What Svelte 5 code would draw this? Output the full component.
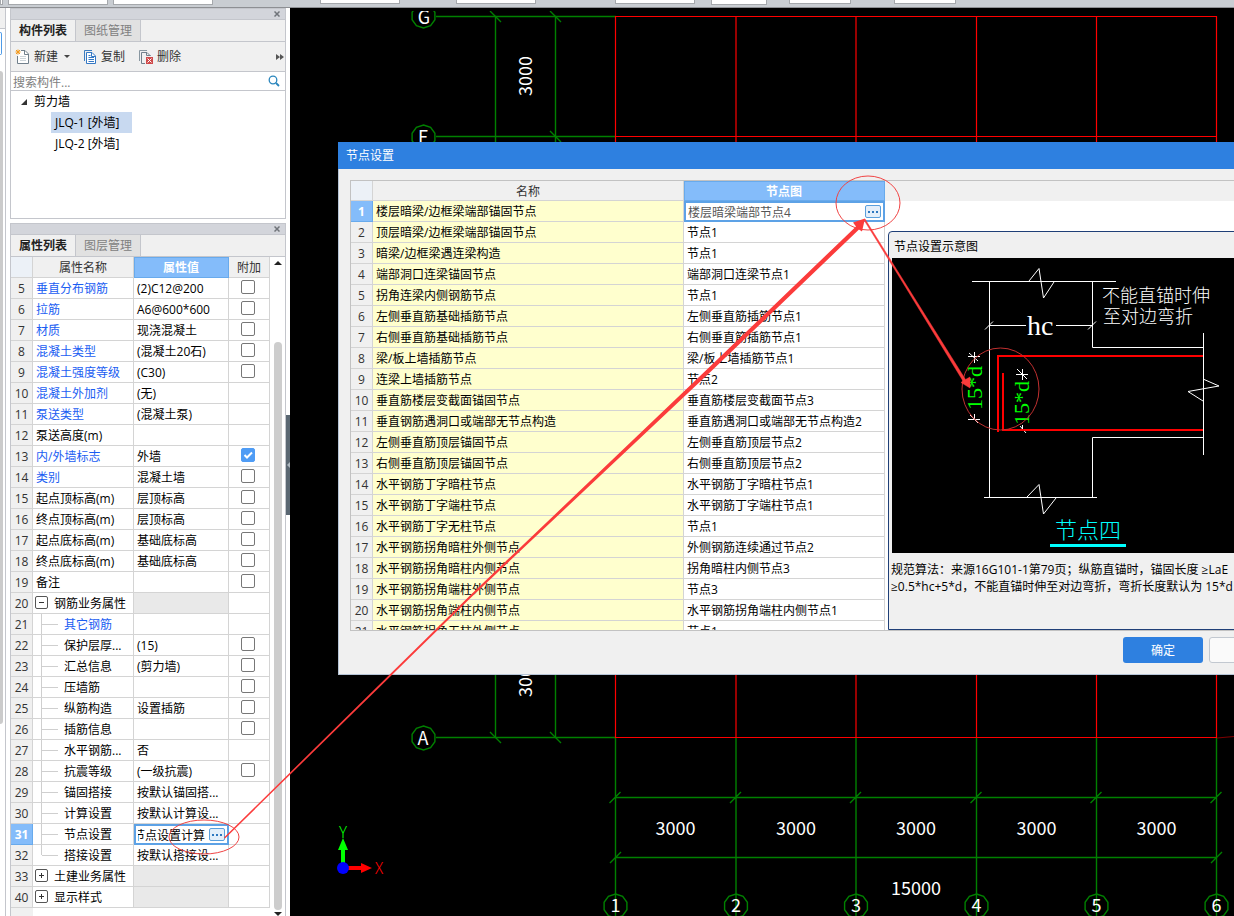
<script>
  const properties = [
    { n: 5, name: '垂直分布钢筋', value: '(2)C12@200', blue: true, box: true },
    { n: 6, name: '拉筋', value: 'A6@600*600', blue: true, box: true },
    { n: 7, name: '材质', value: '现浇混凝土', blue: true, box: true },
    { n: 8, name: '混凝土类型', value: '(混凝土20石)', blue: true, box: true },
    { n: 9, name: '混凝土强度等级', value: '(C30)', blue: true, box: true },
    { n: 10, name: '混凝土外加剂', value: '(无)', blue: true },
    { n: 11, name: '泵送类型', value: '(混凝土泵)', blue: true },
    { n: 12, name: '泵送高度(m)', value: '' },
    { n: 13, name: '内/外墙标志', value: '外墙', blue: true, box: true, checked: true },
    { n: 14, name: '类别', value: '混凝土墙', blue: true, box: true },
    { n: 15, name: '起点顶标高(m)', value: '层顶标高', box: true },
    { n: 16, name: '终点顶标高(m)', value: '层顶标高', box: true },
    { n: 17, name: '起点底标高(m)', value: '基础底标高', box: true },
    { n: 18, name: '终点底标高(m)', value: '基础底标高', box: true },
    { n: 19, name: '备注', value: '', box: true },
    { n: 20, name: '钢筋业务属性', value: '', group: 'open' },
    { n: 21, name: '其它钢筋', value: '', blue: true, child: true },
    { n: 22, name: '保护层厚...', value: '(15)', child: true, box: true },
    { n: 23, name: '汇总信息', value: '(剪力墙)', child: true, box: true },
    { n: 24, name: '压墙筋', value: '', child: true, box: true },
    { n: 25, name: '纵筋构造', value: '设置插筋', child: true, box: true },
    { n: 26, name: '插筋信息', value: '', child: true, box: true },
    { n: 27, name: '水平钢筋...', value: '否', child: true },
    { n: 28, name: '抗震等级', value: '(一级抗震)', child: true, box: true },
    { n: 29, name: '锚固搭接', value: '按默认锚固搭...', child: true },
    { n: 30, name: '计算设置', value: '按默认计算设...', child: true },
    { n: 31, name: '节点设置', value: '节点设置计算', child: true, editing: true },
    { n: 32, name: '搭接设置', value: '按默认搭接设...', child: true, last: true },
    { n: 33, name: '土建业务属性', value: '', group: 'closed' },
    { n: 40, name: '显示样式', value: '', group: 'closed' }
  ];

  const nodes = [
    ['楼层暗梁/边框梁端部锚固节点', '楼层暗梁端部节点4'],
    ['顶层暗梁/边框梁端部锚固节点', '节点1'],
    ['暗梁/边框梁遇连梁构造', '节点1'],
    ['端部洞口连梁锚固节点', '端部洞口连梁节点1'],
    ['拐角连梁内侧钢筋节点', '节点1'],
    ['左侧垂直筋基础插筋节点', '左侧垂直筋插筋节点1'],
    ['右侧垂直筋基础插筋节点', '右侧垂直筋插筋节点1'],
    ['梁/板上墙插筋节点', '梁/板上墙插筋节点1'],
    ['连梁上墙插筋节点', '节点2'],
    ['垂直筋楼层变截面锚固节点', '垂直筋楼层变截面节点3'],
    ['垂直钢筋遇洞口或端部无节点构造', '垂直筋遇洞口或端部无节点构造2'],
    ['左侧垂直筋顶层锚固节点', '左侧垂直筋顶层节点2'],
    ['右侧垂直筋顶层锚固节点', '右侧垂直筋顶层节点2'],
    ['水平钢筋丁字暗柱节点', '水平钢筋丁字暗柱节点1'],
    ['水平钢筋丁字端柱节点', '水平钢筋丁字端柱节点1'],
    ['水平钢筋丁字无柱节点', '节点1'],
    ['水平钢筋拐角暗柱外侧节点', '外侧钢筋连续通过节点2'],
    ['水平钢筋拐角暗柱内侧节点', '拐角暗柱内侧节点3'],
    ['水平钢筋拐角端柱外侧节点', '节点3'],
    ['水平钢筋拐角端柱内侧节点', '水平钢筋拐角端柱内侧节点1'],
    ['水平钢筋拐角无柱外侧节点', '节点1']
  ];

  const axes = [615.5, 736, 856, 976.5, 1096.5, 1216.5];

  // Vertices of the ten-sided axis bubble.
  function bubble(cx, cy) {
    return Array.from({ length: 10 }, (_, i) => {
      const a = (Math.PI * 2 * i) / 10 - Math.PI / 2;
      return `${(cx + 12 * Math.cos(a)).toFixed(1)},${(cy + 12 * Math.sin(a)).toFixed(1)}`;
    }).join(' ');
  }
</script>

<div class="app">
  <header class="ribbon">
    <i class="slot s0"></i><i class="slot s1"></i><i class="slot s2"></i><i class="slot s3"></i>
    <i class="slot s4"></i><i class="slot s5"></i><i class="slot s6"></i><i class="slot s7"></i><i class="slot s8"></i>
  </header>

  <main class="work">
    <div class="edge">
      <i class="edge-top"></i><i class="edge-field"></i><i class="edge-bar"></i>
    </div>

    <aside class="side">
      <section class="panel list">
        <div class="grip"><button class="close" aria-label="关闭"><svg width="6" height="6"><path d="M0.5 0.5 5.5 5.5M5.5 0.5 0.5 5.5" stroke="#70747a" stroke-width="1.5" /></svg></button></div>
        <nav class="tabs"><button class="tab on">构件列表</button><button class="tab">图纸管理</button></nav>
        <div class="tools">
          <button class="tool">
            <svg width="16" height="16" viewBox="0 0 16 16" fill="none">
              <path d="M6 1.500H10L13.500 5V14.500H2.500V7" fill="#fff" stroke="#71808c" />
              <path d="M9.500 1.500V5.500H13.500" stroke="#71808c" />
              <path d="M5 7.500H11M5 9.500H11M5 11.500H11" stroke="#ccd4d9" />
              <path d="M3 0.500V5.500M0.500 3H5.500M1 1 5 5M5 1 1 5" stroke="#f39a1e" />
            </svg>新建
            <svg class="caret" width="6" height="3"><path d="M0 0H6L3 3Z" fill="#444" /></svg>
          </button>
          <button class="tool">
            <svg width="14" height="16" viewBox="0 0 14 16" fill="none">
              <path d="M0.500 12V1.500H8" stroke="#3c7cc0" />
              <path d="M2.500 3.500H8L11.500 7V14.500H2.500Z" fill="#fff" stroke="#3578c4" />
              <path d="M7.500 3.500V7.500H11.500M4.500 6.500H6.500M4.500 8.500H10M4.500 10.500H10M4.500 12.500H10" stroke="#3578c4" />
            </svg>复制
          </button>
          <button class="tool">
            <svg width="15" height="16" viewBox="0 0 15 16" fill="none">
              <path d="M0.500 12V1.500H8" stroke="#8997a1" />
              <path d="M6 14.500H2.500V3.500H8L11.500 7" stroke="#71808c" />
              <path d="M7.500 3.500V6.500H11.500" stroke="#71808c" />
              <rect x="7" y="8" width="7" height="7" fill="#cf4a4a" />
              <path d="M8.500 9.500 12.500 13.500M12.500 9.500 8.500 13.500" stroke="#fff" />
            </svg>删除
          </button>
          <svg class="more" width="8" height="6"><path d="M0 0 4 3 0 6ZM4 0 8 3 4 6Z" fill="#555" /></svg>
        </div>
        <label class="search">
          <input type="text" placeholder="搜索构件..." aria-label="搜索构件" />
          <svg width="12" height="12" fill="none"><circle cx="5" cy="5" r="3.800" stroke="#2a86bd" stroke-width="1.300" /><path d="M8 8 11 11" stroke="#2a86bd" stroke-width="1.800" /></svg>
        </label>
        <ul class="tree">
          <li><svg width="6" height="6"><path d="M6 0V6H0Z" fill="#333" /></svg>剪力墙</li>
          <li class="leaf"><span class="sel">JLQ-1 [外墙]</span></li>
          <li class="leaf"><span>JLQ-2 [外墙]</span></li>
        </ul>
      </section>

      <section class="panel props">
        <div class="grip"><button class="close" aria-label="关闭"><svg width="6" height="6"><path d="M0.5 0.5 5.5 5.5M5.5 0.5 0.5 5.5" stroke="#70747a" stroke-width="1.5" /></svg></button></div>
        <nav class="tabs"><button class="tab on">属性列表</button><button class="tab">图层管理</button></nav>
        <div class="prop-body">
          <div class="prop-grid">
            <table class="grid ptable">
              <colgroup><col class="c-num" /><col class="c-name" /><col class="c-val" /><col class="c-add" /></colgroup>
              <thead><tr><th class="corner"></th><th>属性名称</th><th class="hot">属性值</th><th>附加</th></tr></thead>
              <tbody>
                {#each properties as p}
                  <tr>
                    <td class="num" class:active={p.editing}>{p.n}</td>
                    <td class="name">
                      <div class="cell" class:blue={p.blue}>
                        {#if p.group}
                          <button class="fold" aria-label="展开或折叠">
                            <svg width="7" height="7"><path d={p.group === 'open' ? 'M1 3.5H6' : 'M1 3.5H6M3.5 1V6'} stroke="#333" /></svg>
                          </button>
                        {/if}
                        {#if p.child}<i class="stem" class:last={p.last}></i>{/if}
                        <span>{p.name}</span>
                      </div>
                    </td>
                    <td class="val" class:shade={p.group} class:edit={p.editing}>
                      {#if p.editing}
                        <div class="editor">
                          <input class="tail" type="text" value={p.value} aria-label={p.name} />
                          <button class="dots" aria-label="打开节点设置"><i></i><i></i><i></i></button>
                        </div>
                      {:else}{p.value}{/if}
                    </td>
                    <td class="add">{#if p.box}<input type="checkbox" checked={p.checked} aria-label={p.name} />{/if}</td>
                  </tr>
                {/each}
              </tbody>
            </table>
            <i class="under"></i>
          </div>
          <div class="scroll">
            <svg width="8" height="4"><path d="M4 0 8 4H0Z" fill="#222" /></svg>
            <i class="thumb"></i>
            <svg width="8" height="4"><path d="M0 0H8L4 4Z" fill="#222" /></svg>
          </div>
        </div>
      </section>
    </aside>

    <div class="splitter"><i><svg width="3" height="6"><path d="M3 0V6L0 3Z" fill="#aeb8c0" /></svg></i></div>

    <div class="canvas">
      <svg class="plan" width="100%" height="100%" fill="none">
        <g transform="translate(-290 -8)">
          <g stroke="#008000" stroke-width="1.400">
            <path d="M436 16.500H616M436 136.500H616M436 737.500H616" />
            <path d="M495.500 16V738M555.500 16V738" />
            <path d="M490 11 501 22M550 11 561 22M550 131 561 142M490 732 501 743M550 732 561 743" />
            <path d="M616 797.500H1217M616 857.500H1217M610 863 621 852M1211 863 1222 852" />
            {#each axes as x}
              <path d="M{x} 738V918M{x - 6} 803 {x + 5} 792" />
              <polygon points={bubble(x, 906)} />
            {/each}
            <polygon points={bubble(423.5, 16)} />
            <polygon points={bubble(423.5, 137)} />
            <polygon points={bubble(423.5, 738)} />
          </g>
          <g stroke="#f00" stroke-width="1.200">
            <path d="M616 16.500H1217M616 136.500H1217M616 737.500H1217" />
            {#each axes as x}<path d="M{x} 16V738" />{/each}
            <path d="M1217 738 1240 736" stroke="#800000" />
          </g>
          <g class="dim">
            {#each axes as x, i}
              <text {x} y="912">{i + 1}</text>
              {#if i < 5}<text x={x + 60} y="835">3000</text>{/if}
            {/each}
            <text x="916" y="895">15000</text>
            <text x="424" y="24">G</text>
            <text x="423" y="144">F</text>
            <text x="423" y="745">A</text>
            <text transform="translate(532 76) rotate(-90)">3000</text>
            <text transform="translate(532 677) rotate(-90)">3000</text>
          </g>
          <rect x="400" y="0" width="170" height="11" fill="#000" />
          <path d="M343 838 338 850H341V864H345V850H348Z" fill="#0f0" />
          <path d="M347 866H361V863L372 868 361 873V870H347Z" fill="#f00" />
          <circle cx="343" cy="868" r="6" fill="#00f" />
          <text class="axis" x="343" y="838" fill="#0f0">Y</text>
          <text class="axis" x="379" y="874" fill="#f00">X</text>
        </g>
      </svg>

      <section class="dialog" role="dialog" aria-label="节点设置">
        <h2>节点设置</h2>
        <div class="dialog-body">
          <div class="node-scroll">
            <table class="grid ntable">
              <colgroup><col class="n-num" /><col class="n-name" /><col class="n-val" /></colgroup>
              <thead><tr><th class="corner"></th><th>名称</th><th class="hot">节点图</th></tr></thead>
              <tbody>
                {#each nodes as [name, value], i}
                  <tr>
                    <td class="num" class:active={i === 0}>{i + 1}</td>
                    <td class="label">{name}</td>
                    <td class="val" class:edit={i === 0}>
                      {#if i === 0}
                        <div class="editor">
                          <input type="text" {value} aria-label={name} />
                          <button class="dots" aria-label="选择节点图"><i></i><i></i><i></i></button>
                        </div>
                      {:else}{value}{/if}
                    </td>
                  </tr>
                {/each}
              </tbody>
            </table>
          </div>
          <div class="right">
            <div class="head-fill"></div>
            <figure class="preview">
              <figcaption>节点设置示意图</figcaption>
              <svg class="detail" width="100%" height="295" fill="none">
                <g transform="translate(-892 -258)">
                  <g stroke="#fff">
                    <path d="M972 281.500H1116M1029 281 1039 268.500 1043.500 298 1054 282" />
                    <path d="M989.500 281V497M1092.500 281V347.500H1203M1203.500 333V455" />
                    <path d="M1203 379 1219 386 1188 391.500 1203 401" />
                    <path d="M989 325.500H1026M1056 325.500H1092M985 329.500 993 321.500M1088 329.500 1096 321.500" />
                    <path d="M1203 437.500H1092.500V497M984 497.500H1097M1027 497 1039 484.500 1043.500 514 1056 498" />
                    <path d="M968 356.500H980M974.500 352V363M969 353 978 361M968 419.500H980M974.500 414V420M970 415 978 423" />
                    <path d="M1016 374.500H1028M1022.500 369V380M1017 369 1027 379M1020 430.500H1034M1022.500 425V431M1020 426 1026 433" />
                  </g>
                  <path d="M1203 356H998V432M1003 373V430H1203" stroke="#f00" stroke-width="2" />
                  <text class="hc" x="1027" y="335">hc</text>
                  <text class="note" x="1102" y="302">不能直锚时伸</text>
                  <text class="note" x="1103" y="323">至对边弯折</text>
                  <text class="bend" transform="translate(982 410) rotate(-90)">15*d</text>
                  <text class="bend" transform="translate(1029 425) rotate(-90)">15*d</text>
                  <text class="four" x="1055" y="538">节点四</text>
                  <rect x="1050" y="544" width="76" height="3" fill="#0ff" />
                </g>
              </svg>
              <p>规范算法：来源16G101-1第79页；纵筋直锚时，锚固长度 ≥LaE<br />≥0.5*hc+5*d，不能直锚时伸至对边弯折，弯折长度默认为 15*d</p>
            </figure>
          </div>
        </div>
        <footer><button class="ok">确定</button><button class="cancel">取消</button></footer>
      </section>
    </div>
  </main>

  <svg class="marks" width="100%" height="100%" fill="none">
    <g stroke="#f04444" stroke-width="1">
      <ellipse cx="204" cy="837" rx="35" ry="17" />
      <ellipse cx="868" cy="203" rx="32" ry="27" />
      <ellipse cx="1000.500" cy="389" rx="38.500" ry="41" stroke="#c03030" />
    </g>
    <g fill="#fb3b3b">
      <path d="M224 837.500 470 595.500 710 366.500 856 226.500 853 222.500 865 218.500 862 231.500 859 229.500 713 369.500 471.500 597 225 838.500Z" />
      <path d="M865 219 965.500 379.500 970 377 970 388 961 382.500 963 381 900 278 864 220Z" stroke="#fb3b3b" stroke-width="0.500" />
    </g>
  </svg>
</div>

<style>
  :global(body) { margin: 0; }
  .app, .app * { box-sizing: border-box; }
  .app {
    position: relative;
    display: flex;
    flex-direction: column;
    min-height: 100vh;
    overflow: hidden;
    background: #fff;
    color: #111;
    font: 12px/20px "Open Sans", "Noto Sans CJK SC", sans-serif;
  }
  button, input { font: inherit; color: inherit; margin: 0; padding: 0; border: 0; background: none; }
  input { min-width: 0; outline: 0; }
  svg { flex: none; }
  .ribbon { display: flex; flex: none; height: 8px; background: #c9cdd2; border-bottom: 1px solid #8d8f93; overflow: hidden; }
  .slot { flex: none; height: 4px; background: #fff; border: 1px solid #a5a8ac; border-top: 0; }
  .s0 { width: 3px; margin-right: 5px; height: 5px; }
  .s1 { width: 100px; margin-right: 5px; height: 5px; }
  .s2 { width: 100px; margin-right: 107px; height: 5px; }
  .s3 { width: 80px; margin-right: 56px; }
  .s4 { width: 80px; margin-right: 79px; }
  .s5 { width: 80px; margin-right: 16px; }
  .s6 { width: 56px; margin-right: 22px; height: 5px; }
  .s7 { width: 62px; margin-right: 43px; }
  .s8 { width: 62px; }
  .work { display: flex; flex: 1; }
  .edge { display: flex; flex-direction: column; flex: none; width: 6px; margin-right: 4px; border-right: 1px solid #c4c6cc; }
  .edge-top { height: 21px; background: #f0f0f0; border-bottom: 1px solid #c4c6cc; }
  .edge-field { width: 2px; height: 23px; margin: 3px 0 16px; border: 1px solid #4e9be8; border-left: 0; border-radius: 0 2px 2px 0; }
  .edge-bar { width: 3px; height: 653px; background: #cbcbcb; border-radius: 0 3px 3px 0; }

  .side { display: flex; flex-direction: column; flex: none; width: 276px; gap: 4px; }
  .panel { display: flex; flex-direction: column; border: 1px solid #c4c6cc; border-top: 0; }
  .list { height: 211px; }
  .props { flex: 1; border-bottom: 0; }
  .grip { display: flex; justify-content: flex-end; align-items: center; height: 12px; padding-right: 5px; background: #d3d5db; border-top: 1px solid #c4c6cc; border-bottom: 1px solid #c4c6cc; }
  .close { display: flex; }
  .tabs { display: flex; height: 22px; background: #f0f0f0; border-bottom: 1px solid #c4c6cc; }
  .tab { width: 65px; background: #e1e1e1; color: #808080; border-right: 1px solid #c4c6cc; }
  .tab.on { background: #f0f0f0; color: #222; font-weight: 700; }
  .tools { display: flex; align-items: center; height: 30px; padding: 0 1px 0 4px; gap: 14px; background: #f0f0f0; border-bottom: 1px solid #c4c6cc; color: #333; }
  .tool { display: flex; align-items: center; gap: 3px; white-space: nowrap; }
  .caret { margin-left: 3px; }
  .more { margin-left: auto; }
  .search { display: flex; align-items: center; height: 19px; padding: 0 5px 0 2px; border-bottom: 1px solid #c4c6cc; }
  .search input { flex: 1; height: 18px; padding-top: 2px; line-height: 16px; }
  .search input::placeholder { color: #808080; opacity: 1; }
  .tree { margin: 0; padding: 0; list-style: none; line-height: 21px; }
  .tree li { display: flex; align-items: center; gap: 7px; padding-left: 10px; color: #000; }
  .tree .leaf { padding-left: 40px; }
  .leaf span { width: 81px; padding-left: 4px; white-space: nowrap; }
  .leaf .sel { background: #c8d9f0; }

  .prop-body { display: flex; flex: 1; background: #fff; }
  .prop-grid { display: flex; flex-direction: column; width: 259px; }
  .under { flex: 1; width: 22px; background: #f0f0f0; }
  .grid { border-collapse: separate; border-spacing: 0; table-layout: fixed; }
  .ptable { width: 259px; }
  .c-num, .n-num { width: 22px; }
  .c-name { width: 101px; }
  .c-val { width: 95px; }
  .c-add { width: 41px; }
  th, td { height: 21px; padding: 2px 0 0; line-height: 18px; border-right: 1px solid #d4d4d4; border-bottom: 1px solid #d4d4d4; white-space: nowrap; overflow: hidden; text-align: left; color: #000; }
  th { background: #f0f0f0; color: #333; text-align: center; font-weight: 400; }
  th.corner { background: #ecf1f7; }
  th.hot { background: #84bcfa; color: #fff; font-weight: 700; border-color: #68aaec; box-shadow: inset 1px 1px #68aaec; }
  .num { text-align: center; background: #f0f0f0; color: #333; }
  .num.active { background: #84bcfa; color: #fff; font-weight: 700; border-color: #68aaec; }
  .name { padding: 0 0 0 2px; }
  .val { padding-left: 3px; }
  .shade { background: #e9e9e9; }
  .cell { display: flex; align-items: center; height: 20px; }
  .cell span { padding: 2px 0 0 1px; }
  .blue { color: #1a5df2; }
  .fold { display: flex; align-items: center; justify-content: center; flex: none; width: 13px; height: 13px; margin: 0 5px 2px 0; border: 1px solid #555; border-radius: 2px; background: #fff; }
  .stem { flex: none; width: 17px; height: 20px; margin: 0 5px 0 6px; border-left: 1px solid #cfcfcf; }
  .stem::after { content: ""; display: block; height: 10px; border-bottom: 1px solid #cfcfcf; }
  .stem.last { align-self: flex-start; height: 10px; }
  .add { line-height: 0; vertical-align: top; padding: 2px 0 0 12px; }
  .add input { appearance: none; width: 14px; height: 14px; border: 1px solid #777; border-radius: 2px; background: #fff; }
  .add input:checked { border-color: #4f9cf5; background: #4f9cf5 url("data:image/svg+xml,%3Csvg xmlns='http://www.w3.org/2000/svg' width='12' height='12'%3E%3Cpath d='M2.500 6 5 8.500 10 3.500' fill='none' stroke='white' stroke-width='2'/%3E%3C/svg%3E") center no-repeat; }
  .val.edit { padding: 0; border: 0; }
  .editor { display: flex; align-items: center; height: 21px; padding: 0 2px; background: #fff; border: 2px solid #5da2e6; }
  .editor input { flex: 1; width: 0; height: 17px; padding-top: 1px; line-height: 16px; }
  .editor .tail { direction: rtl; }
  .dots { display: flex; align-items: center; justify-content: center; gap: 2px; flex: none; width: 16px; height: 13px; margin-left: 4px; border: 1px solid #5a9fdc; border-radius: 2px; background: #e4effa; }
  .dots i { width: 2px; height: 2px; background: #2e78c0; }
  .scroll { display: flex; flex-direction: column; align-items: center; flex: 1; padding: 4px 0 0; }
  .thumb { flex: 1; width: 8px; margin: 77px 0 2px; background: #cdcdcd; border-radius: 4px; }

  .splitter { display: flex; flex: none; width: 4px; padding-top: 407px; }
  .splitter i { display: flex; align-items: center; justify-content: flex-end; width: 4px; height: 100px; background: #5a6772; }

  .canvas { position: relative; flex: 1; min-width: 0; overflow: hidden; background: #000; }
  .plan { position: absolute; inset: 0; }
  .dim { font: 18px "Noto Sans CJK SC", sans-serif; fill: #fff; text-anchor: middle; }
  .axis { font: 300 16px "Noto Sans CJK SC", sans-serif; text-anchor: middle; }

  .dialog { position: absolute; left: 48px; top: 134px; display: flex; flex-direction: column; width: 963px; background: #f0f0f0; border: 1px solid #b6c4d6; border-top: 0; }
  h2 { margin: 0 -1px 11px; height: 27px; padding-left: 8px; background: #2e80e0; color: #fff; font-size: 12px; font-weight: 400; line-height: 27px; }
  .dialog-body { display: flex; height: 451px; margin: 0 11px; border: 1px solid #c2c2c2; background: #fff; overflow: hidden; }
  .node-scroll { flex: none; width: 534px; overflow: hidden; }
  .ntable { width: 534px; }
  .ntable th { height: 20px; line-height: 17px; }
  .n-name { width: 311px; }
  .n-val { width: 201px; }
  .label { padding-left: 3px; background: #ffffce; }
  .ntable .editor { color: #555; }
  .right { display: flex; flex-direction: column; flex: 1; min-width: 0; padding-left: 3px; }
  .head-fill { flex: none; height: 20px; margin: 0 0 30px -3px; background: #f0f0f0; }
  .preview { display: flex; flex-direction: column; flex: 1; margin: 0; background: #f0f0f0; border: 1px solid #1f3f77; border-radius: 4px 0 0 0; }
  figcaption { height: 26px; padding-left: 5px; line-height: 30px; color: #000; }
  .detail { margin-left: 3px; background: #000; }
  .preview p { margin: 8px 0 0 2px; line-height: 17px; white-space: nowrap; color: #000; }
  .hc { font: 28px "Liberation Serif", serif; fill: #fff; }
  .note { font: 300 18px "Noto Sans CJK SC", sans-serif; fill: #fff; }
  .bend { font: 22px "Liberation Serif", serif; fill: #0f0; }
  .four { font: 300 22px "Noto Sans CJK SC", sans-serif; fill: #0ff; }
  footer { display: flex; justify-content: flex-end; gap: 6px; padding: 6px 11px 11px; }
  footer button { width: 80px; height: 26px; padding-top: 2px; border-radius: 3px; }
  .ok { background: #2e80e0; color: #fff; }
  .cancel { background: #fafafa; border: 1px solid #c2c8d0; }
  .marks { position: absolute; inset: 0; pointer-events: none; }
</style>
